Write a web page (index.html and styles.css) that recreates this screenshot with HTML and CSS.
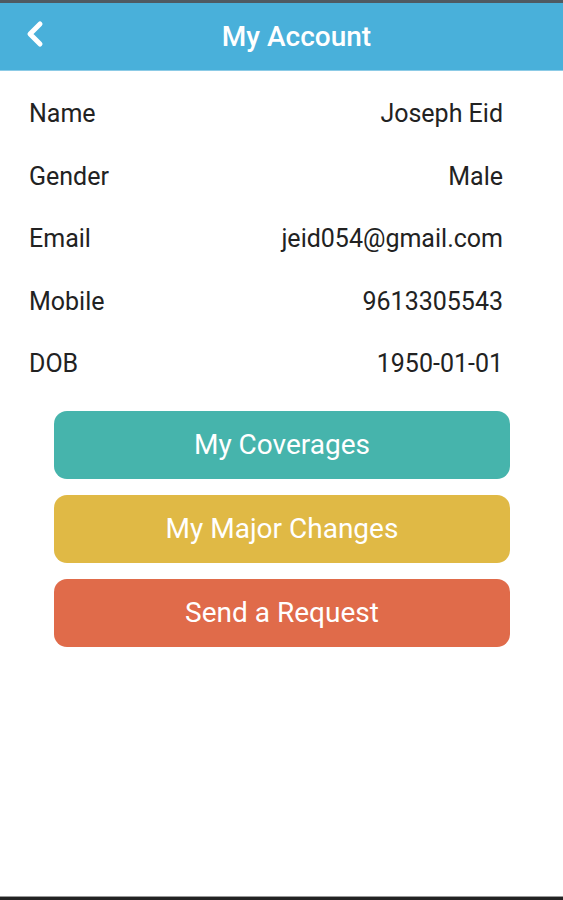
FILE: index.html
```html
<!DOCTYPE html>
<html>
<head>
    <title>My Account</title>
    <link rel="stylesheet" href="styles.css">
</head>
<body>
    <div class="screen">
        <div class="status-strip"></div>
        <header class="topbar">
            <a class="back" href="#">
                <svg width="22" height="28" viewBox="0 0 22 28">
                    <path d="M16 4 L6 14 L16 24" fill="none" stroke="#fff" stroke-width="5" stroke-linecap="round" stroke-linejoin="round"/>
                </svg>
            </a>
            <h1>My Account</h1>
        </header>

        <div class="details">
            <div class="row"><span>Name</span><span>Joseph Eid</span></div>
            <div class="row"><span>Gender</span><span>Male</span></div>
            <div class="row"><span>Email</span><span>jeid054@gmail.com</span></div>
            <div class="row"><span>Mobile</span><span>9613305543</span></div>
            <div class="row"><span>DOB</span><span>1950-01-01</span></div>
        </div>

        <div class="actions">
            <button type="button" class="btn btn-teal">My Coverages</button>
            <button type="button" class="btn btn-yellow">My Major Changes</button>
            <button type="button" class="btn btn-orange">Send a Request</button>
        </div>

        <div class="filler"></div>
        <div class="bottom-line"></div>
    </div>
</body>
</html>
```

FILE: styles.css
```css
body {
    margin: 0;
    font-family: Roboto, "Liberation Sans", sans-serif;
    background: #fff;
}

.screen {
    width: 563px;
    height: 900px;
    display: flex;
    flex-direction: column;
}

.status-strip {
    height: 3px;
    background: #4f5a62;
}

.topbar {
    height: 67px;
    background: #49b0da;
    border-bottom: 1px solid #8ccbe6;
    display: flex;
    align-items: center;
}

.back {
    display: flex;
    margin-left: 24px;
    margin-top: -6px;
}

.topbar h1 {
    flex: 1;
    margin: 0;
    padding-right: 16px;
    text-align: center;
    color: #fff;
    font-size: 28px;
    font-weight: 500;
}

.details {
    padding: 28px 60px 0 29px;
}

.row {
    display: flex;
    justify-content: space-between;
    height: 62.5px;
    line-height: 30px;
    font-size: 25px;
    color: #222;
}

.actions {
    display: flex;
    flex-direction: column;
    gap: 16px;
    padding: 0 53px 0 54px;
    margin-top: -1px;
}

.btn {
    height: 68px;
    border: none;
    border-radius: 13px;
    color: #fff;
    font-family: Roboto, "Liberation Sans", sans-serif;
    font-size: 28px;
    padding: 0 0 1px 0;
}

.btn-teal {
    background: #46b4ac;
}

.btn-yellow {
    background: #e0b945;
}

.btn-orange {
    background: #e06b4a;
}

.filler {
    flex: 1;
}

.bottom-line {
    height: 3px;
    background: #222;
    border-top: 1px solid #999;
}
```
